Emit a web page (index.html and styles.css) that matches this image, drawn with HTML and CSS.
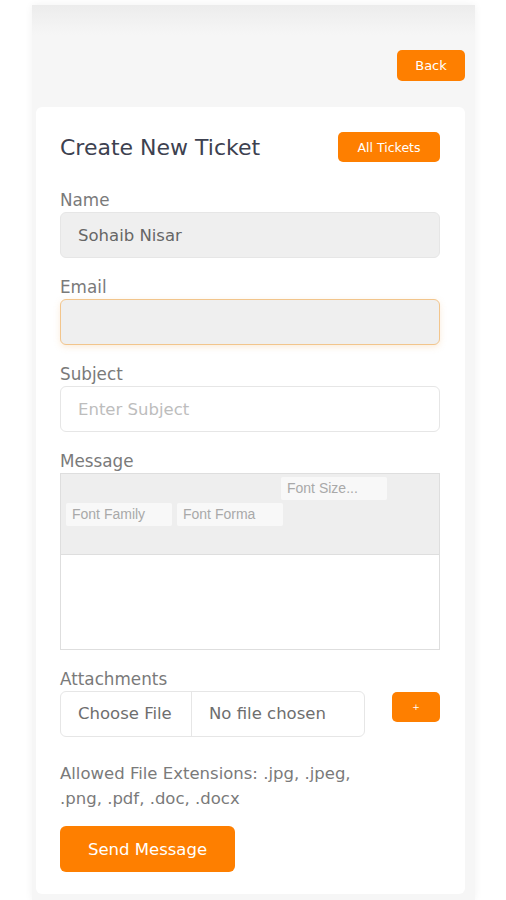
FILE: index.html
```html
<!DOCTYPE html>
<html lang="en">
<head>
    <meta charset="UTF-8">
    <meta name="viewport" content="width=device-width, initial-scale=1.0">
    <title>Create New Ticket</title>
    <link rel="stylesheet" href="styles.css">
</head>
<body>
    <div class="panel">
        <div class="top-bar">
            <a href="#" class="btn btn-back">Back</a>
        </div>
        <div class="card">
            <div class="card-head">
                <h2>Create New Ticket</h2>
                <a href="#" class="btn btn-small">All Tickets</a>
            </div>
            <form class="ticket-form">
                <div class="field first">
                    <label for="name">Name</label>
                    <input class="input filled" type="text" id="name" value="Sohaib Nisar" readonly>
                </div>
                <div class="field">
                    <label for="email">Email</label>
                    <input class="input filled focused" type="email" id="email">
                </div>
                <div class="field">
                    <label for="subject">Subject</label>
                    <input class="input" type="text" id="subject" placeholder="Enter Subject">
                </div>
                <div class="field">
                    <label>Message</label>
                    <div class="editor">
                        <div class="toolbar">
                            <div class="tool-row right">
                                <span class="tool">Font Size...</span>
                            </div>
                            <div class="tool-row">
                                <span class="tool">Font Family</span>
                                <span class="tool">Font Forma</span>
                            </div>
                        </div>
                        <div class="editor-body"></div>
                    </div>
                </div>
                <div class="field">
                    <label>Attachments</label>
                    <div class="attach-row">
                        <div class="file-box">
                            <span class="file-btn">Choose File</span>
                            <span class="file-name">No file chosen</span>
                        </div>
                        <button type="button" class="btn btn-plus">+</button>
                    </div>
                </div>
                <p class="note">Allowed File Extensions: .jpg, .jpeg, .png, .pdf, .doc, .docx</p>
                <button type="button" class="btn btn-send">Send Message</button>
            </form>
        </div>
    </div>
</body>
</html>
```

FILE: styles.css
```css
body {
    margin: 0;
    background: #fff;
    font-family: "DejaVu Sans", sans-serif;
    color: #777;
}
.panel {
    margin: 5px 0 0 32px;
    width: 443px;
    box-sizing: border-box;
    padding: 0 10px 0 4px;
    background: linear-gradient(#ececec, #f6f6f6 30px);
    box-shadow: 0 0 8px rgba(0, 0, 0, 0.06);
    min-height: 895px;
}
.top-bar {
    display: flex;
    justify-content: flex-end;
    padding-top: 45px;
}
.btn {
    display: inline-flex;
    align-items: center;
    justify-content: center;
    background: #fe7f00;
    color: #fff;
    border: none;
    text-decoration: none;
    font-family: "DejaVu Sans", sans-serif;
    box-sizing: border-box;
    cursor: pointer;
}
.btn-back {
    width: 68px;
    height: 31px;
    border-radius: 5px;
    font-size: 13px;
}
.card {
    margin-top: 26px;
    background: #fff;
    border-radius: 6px;
    padding: 25px 25px 22px 24px;
}
.card-head {
    display: flex;
    justify-content: space-between;
    align-items: center;
    height: 30px;
}
.card-head h2 {
    margin: 0;
    font-size: 22px;
    font-weight: normal;
    color: #3d4150;
}
.btn-small {
    width: 102px;
    height: 30px;
    border-radius: 5px;
    font-size: 12.5px;
}
.field {
    margin-top: 17px;
}
.field.first {
    margin-top: 26px;
}
.field label {
    display: block;
    font-size: 16.8px;
    line-height: 24px;
    color: #7a7a7a;
}
.input {
    display: block;
    width: 100%;
    height: 46px;
    box-sizing: border-box;
    border: 1px solid #e6e6e6;
    border-radius: 6px;
    padding: 0 17px;
    font-family: "DejaVu Sans", sans-serif;
    font-size: 16.5px;
    color: #666;
    background: #fff;
    outline: none;
}
.input::placeholder {
    color: #bdbdbd;
}
.input.filled {
    background: #efefef;
}
.input.focused {
    border-color: #f2c58c;
    box-shadow: 0 2px 6px rgba(240, 180, 110, 0.25);
}
.editor {
    border: 1px solid #dedede;
}
.toolbar {
    height: 81px;
    box-sizing: border-box;
    background: #eeeeee;
    border-bottom: 1px solid #dedede;
    padding: 3px 5px;
}
.tool-row {
    display: flex;
    gap: 5px;
    margin-bottom: 3px;
}
.tool-row.right {
    padding-left: 215px;
}
.tool {
    width: 106px;
    height: 23px;
    box-sizing: border-box;
    padding-left: 6px;
    background: #f8f8f8;
    border-radius: 2px;
    font-family: "Liberation Sans", Arial, sans-serif;
    font-size: 14px;
    line-height: 23px;
    color: #a9a9a9;
}
.editor-body {
    height: 94px;
    background: #fff;
}
.attach-row {
    display: flex;
    justify-content: space-between;
    align-items: flex-start;
}
.file-box {
    display: flex;
    width: 305px;
    height: 46px;
    box-sizing: border-box;
    border: 1px solid #e6e6e6;
    border-radius: 6px;
    font-size: 16.5px;
    color: #6e6e6e;
    line-height: 44px;
}
.file-btn {
    width: 131px;
    box-sizing: border-box;
    padding-left: 17px;
    border-right: 1px solid #e6e6e6;
}
.file-name {
    padding-left: 17px;
}
.btn-plus {
    width: 48px;
    height: 30px;
    margin-top: 1px;
    border-radius: 5px;
    font-size: 9px;
}
.note {
    margin: 24px 0 0;
    max-width: 310px;
    font-size: 16.5px;
    line-height: 25px;
    color: #7a7a7a;
}
.btn-send {
    margin-top: 15px;
    width: 175px;
    height: 46px;
    border-radius: 6px;
    font-size: 16.5px;
}
```
